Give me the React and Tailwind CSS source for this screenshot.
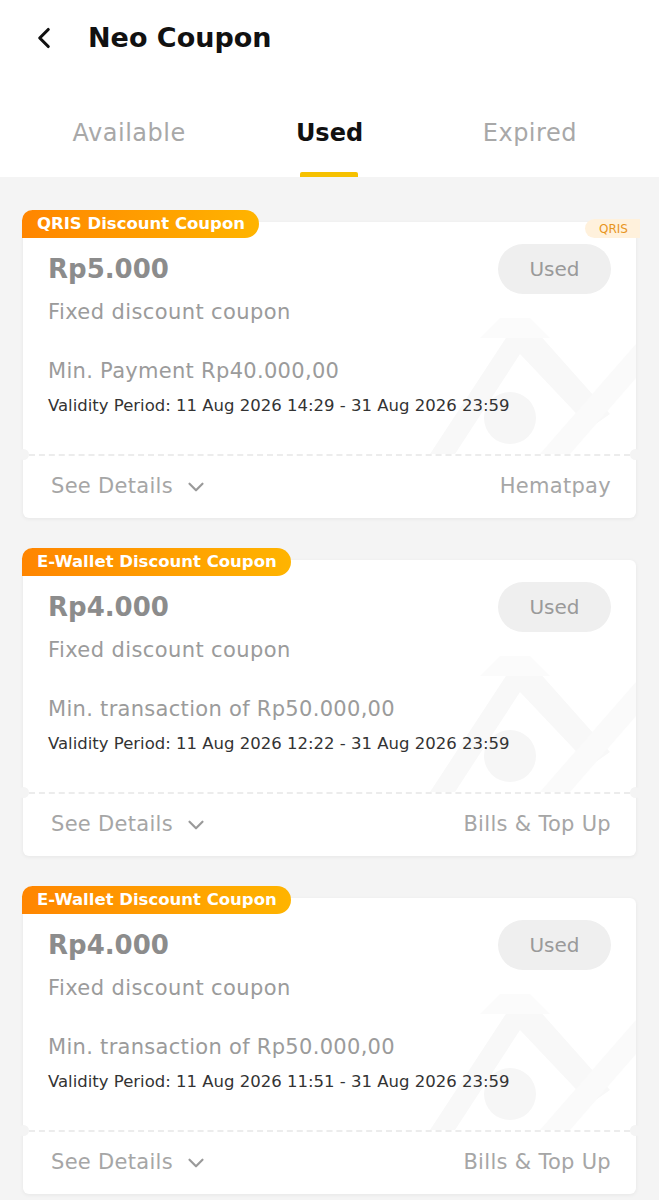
import { ChevronLeft, ChevronDown } from 'lucide-react';

const coupons = [
  {
    tag: 'QRIS Discount Coupon',
    amount: 'Rp5.000',
    min: 'Min. Payment Rp40.000,00',
    validity: 'Validity Period: 11 Aug 2026 14:29 - 31 Aug 2026 23:59',
    merchant: 'Hematpay',
    qris: true,
  },
  {
    tag: 'E-Wallet Discount Coupon',
    amount: 'Rp4.000',
    min: 'Min. transaction of Rp50.000,00',
    validity: 'Validity Period: 11 Aug 2026 12:22 - 31 Aug 2026 23:59',
    merchant: 'Bills & Top Up',
  },
  {
    tag: 'E-Wallet Discount Coupon',
    amount: 'Rp4.000',
    min: 'Min. transaction of Rp50.000,00',
    validity: 'Validity Period: 11 Aug 2026 11:51 - 31 Aug 2026 23:59',
    merchant: 'Bills & Top Up',
  },
];

function Watermark() {
  return (
    <svg className="absolute right-0 bottom-0 pointer-events-none" width="226" height="136" viewBox="0 0 226 136">
      <path d="M20 136 L105 6 L120 6 L200 96 L180 110 L110 36 L45 136 Z" fill="#f8f8f8" />
      <path d="M130 136 L226 26 L226 60 L160 136 Z" fill="#fafafa" />
      <circle cx="100" cy="100" r="26" fill="#f6f6f6" />
      <path d="M70 20 L140 20 L120 0 L90 0 Z" fill="#fbfbfb" />
    </svg>
  );
}

function CouponCard({ c }) {
  return (
    <div className="relative mx-[23px] mt-[42px] first:mt-0">
      <div className="absolute left-[-1px] top-[-12px] z-10 h-[28px] pl-[15px] pr-[14px] flex items-center rounded-tl-[12px] rounded-tr-[16px] rounded-br-[16px] bg-gradient-to-r from-[#ff8500] to-[#ffb400] text-white text-[16.5px] font-semibold">
        {c.tag}
      </div>
      {c.qris && (
        <div className="absolute right-[-4px] top-[-3px] z-10 h-[19px] pl-[14px] pr-[12px] flex items-center rounded-l-full bg-[#fff1dc] text-[#e8951c] text-[12px]">
          QRIS
        </div>
      )}
      <div className="bg-white rounded-[6px] shadow-[0_1px_4px_rgba(0,0,0,0.06)]">
        <div className="relative h-[232px] px-[25px] pt-[22px] overflow-hidden">
          <Watermark />
          <div className="relative flex items-center justify-between h-[50px]">
            <div className="text-[26px] font-bold text-[#8c8c8c]">{c.amount}</div>
            <div className="w-[113px] h-[50px] rounded-full bg-[#efefef] flex items-center justify-center text-[20px] text-[#9a9a9a]">
              Used
            </div>
          </div>
          <div className="relative mt-[4px] text-[21px] tracking-[0.4px] leading-[28px] text-[#9b9b9b]">Fixed discount coupon</div>
          <div className="relative mt-[31px] text-[21px] tracking-[0.3px] leading-[28px] text-[#9b9b9b]">{c.min}</div>
          <div className="relative mt-[10px] text-[16.5px] leading-[22px] text-[#333333]">{c.validity}</div>
        </div>
        <div className="relative">
          <div className="border-t-2 border-dashed border-[#ececec] mx-[6px]"></div>
          <div className="absolute left-[-5px] top-[-5px] w-[11px] h-[11px] rounded-full bg-[#f4f4f4]"></div>
          <div className="absolute right-[-5px] top-[-5px] w-[11px] h-[11px] rounded-full bg-[#f4f4f4]"></div>
        </div>
        <div className="h-[62px] pr-[25px] pl-[28px] flex items-center justify-between text-[21px] tracking-[0.3px] text-[#a6a6a6]">
          <div className="flex items-center gap-[10px]">
            See Details
            <ChevronDown size={26} strokeWidth={2} className="text-[#9a9a9a]" />
          </div>
          <div>{c.merchant}</div>
        </div>
      </div>
    </div>
  );
}

export default function App() {
  return (
    <div className="min-h-[1200px] bg-[#f4f4f4] font-['DejaVu_Sans',sans-serif]">
      <div className="bg-white">
        <div className="h-[76px] flex items-center pl-[27px]">
          <ChevronLeft size={34} strokeWidth={2.2} className="text-[#111]" />
          <h1 className="ml-[27px] text-[27px] font-bold text-[#111]">Neo Coupon</h1>
        </div>
        <div className="h-[101px] px-[29px] grid grid-cols-3">
          {['Available', 'Used', 'Expired'].map((t) => (
            <div key={t} className="relative flex items-center justify-center pt-[12px]">
              <span className={t === 'Used' ? 'text-[24px] font-bold text-[#111]' : 'text-[24px] tracking-[0.5px] text-[#a8a8a8]'}>
                {t}
              </span>
              {t === 'Used' && (
                <div className="absolute bottom-0 left-1/2 -translate-x-1/2 w-[58px] h-[5px] rounded-t-[2px] bg-[#f6c100]"></div>
              )}
            </div>
          ))}
        </div>
      </div>
      <div className="pt-[45px] pb-[10px]">
        {coupons.map((c, i) => (
          <CouponCard key={i} c={c} />
        ))}
      </div>
    </div>
  );
}
